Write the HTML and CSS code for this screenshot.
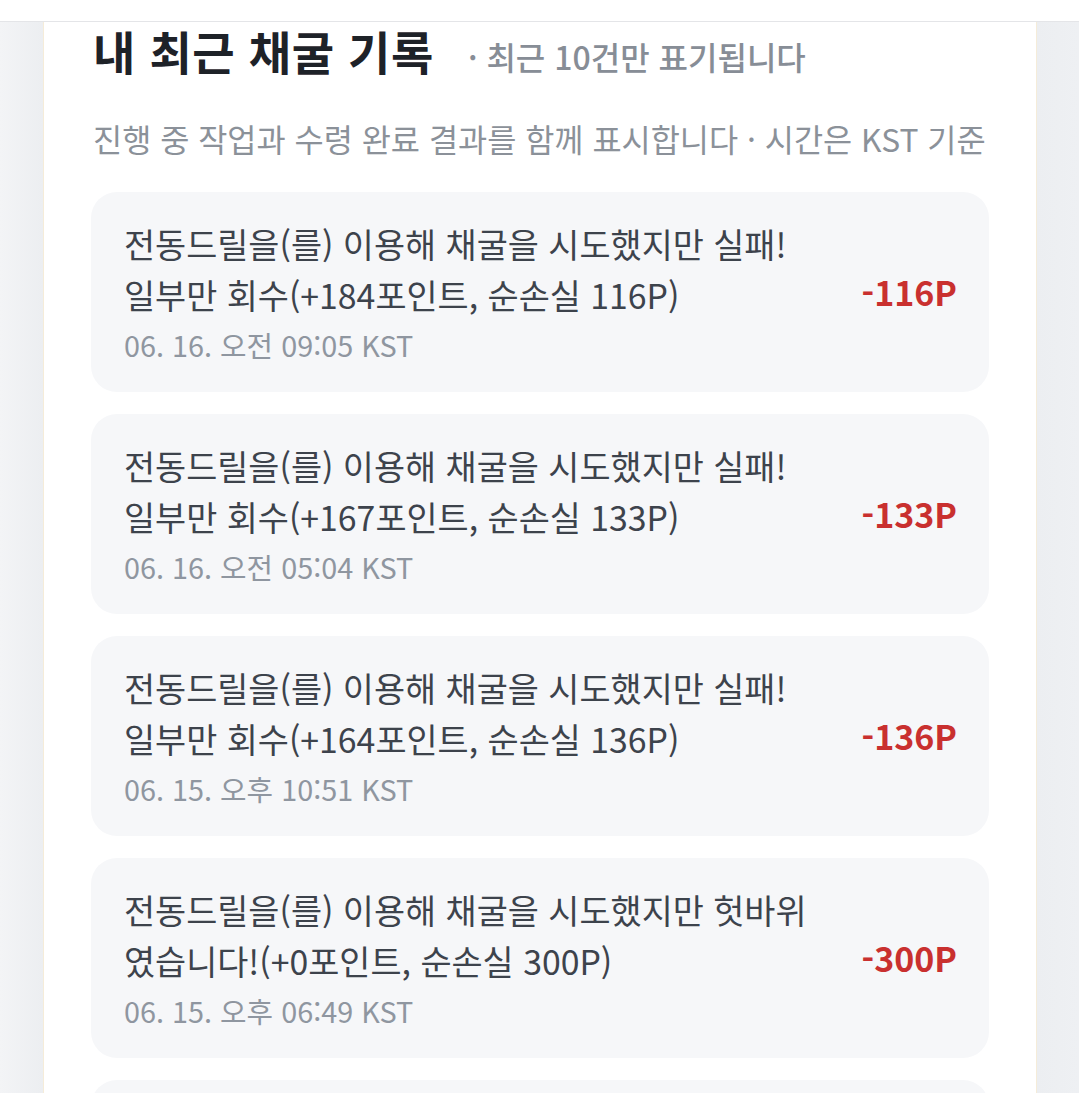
FILE: index.html
```html
<!DOCTYPE html>
<html lang="ko">
<head>
<meta charset="utf-8">
<title>내 최근 채굴 기록</title>
<link rel="stylesheet" href="styles.css">
</head>
<body>
<div class="topbar"></div>
<main class="page">
  <section class="panel">
    <header class="panel-head">
      <h2 class="title">내 최근 채굴 기록</h2>
      <span class="title-note">· 최근 10건만 표기됩니다</span>
    </header>
    <p class="desc">진행 중 작업과 수령 완료 결과를 함께 표시합니다 · 시간은 KST 기준</p>
    <ul class="log-list">
      <li class="log-item">
        <div class="log-body">
          <p class="log-text">전동드릴을(를) 이용해 채굴을 시도했지만 실패! 일부만 회수(+184포인트, 순손실 116P)</p>
          <p class="log-time">06. 16. 오전 09:05 KST</p>
        </div>
        <div class="log-amount">-116P</div>
      </li>
      <li class="log-item">
        <div class="log-body">
          <p class="log-text">전동드릴을(를) 이용해 채굴을 시도했지만 실패! 일부만 회수(+167포인트, 순손실 133P)</p>
          <p class="log-time">06. 16. 오전 05:04 KST</p>
        </div>
        <div class="log-amount">-133P</div>
      </li>
      <li class="log-item">
        <div class="log-body">
          <p class="log-text">전동드릴을(를) 이용해 채굴을 시도했지만 실패! 일부만 회수(+164포인트, 순손실 136P)</p>
          <p class="log-time">06. 15. 오후 10:51 KST</p>
        </div>
        <div class="log-amount">-136P</div>
      </li>
      <li class="log-item">
        <div class="log-body">
          <p class="log-text">전동드릴을(를) 이용해 채굴을 시도했지만 헛바위였습니다!(+0포인트, 순손실 300P)</p>
          <p class="log-time">06. 15. 오후 06:49 KST</p>
        </div>
        <div class="log-amount">-300P</div>
      </li>
      <li class="log-item log-item-cut" aria-hidden="true"></li>
    </ul>
  </section>
</main>
</body>
</html>
```
FILE: styles.css
```css
html, body {
  margin: 0;
  padding: 0;
}
body {
  background: linear-gradient(90deg, #f3f4f6 0px, #eceef1 43px, #eceef1 calc(100% - 43px), #eef0f3 100%);
  font-family: "Noto Sans CJK KR", "Noto Sans", sans-serif;
  overflow: hidden;
  height: 1093px;
}
.topbar {
  height: 21px;
  background: #ffffff;
  border-bottom: 1px solid #e4e5e8;
}
.page {
  padding: 0 42px 0 43px;
}
.panel {
  background: #ffffff;
  border-left: 1px solid #f5ecd9;
  border-right: 1px solid #f5ecd9;
  padding: 0 47px 40px 47px;
}
.panel-head {
  display: flex;
  align-items: baseline;
  gap: 34px;
  padding-left: 2px;
}
.title {
  margin: 0;
  font-size: 46px;
  font-weight: 700;
  line-height: 56px;
  color: #1e2228;
  letter-spacing: 0.6px;
}
.title-note {
  font-size: 32px;
  font-weight: 500;
  color: #878d96;
}
.desc {
  margin: 37px 0 0 2px;
  font-size: 31.7px;
  line-height: 44px;
  color: #8b9199;
}
.log-list {
  list-style: none;
  margin: 32px 0 0 0;
  padding: 0;
  display: flex;
  flex-direction: column;
  gap: 22px;
}
.log-item {
  display: flex;
  align-items: center;
  gap: 40px;
  background: #f6f7f9;
  border-radius: 26px;
  padding: 26px 32px 30px 33px;
  min-height: 144px;
}
.log-item-cut {
  min-height: 144px;
}
.log-body {
  flex: 1;
  min-width: 0;
}
.log-text {
  margin: 0;
  font-size: 33.8px;
  line-height: 51px;
  color: #3d434c;
}
.log-time {
  margin: 8px 0 0 0;
  font-size: 28.8px;
  line-height: 34px;
  color: #8f96a0;
}
.log-amount {
  flex: none;
  font-size: 34px;
  font-weight: 700;
  color: #c9302f;
  padding-top: 2px;
}
```
